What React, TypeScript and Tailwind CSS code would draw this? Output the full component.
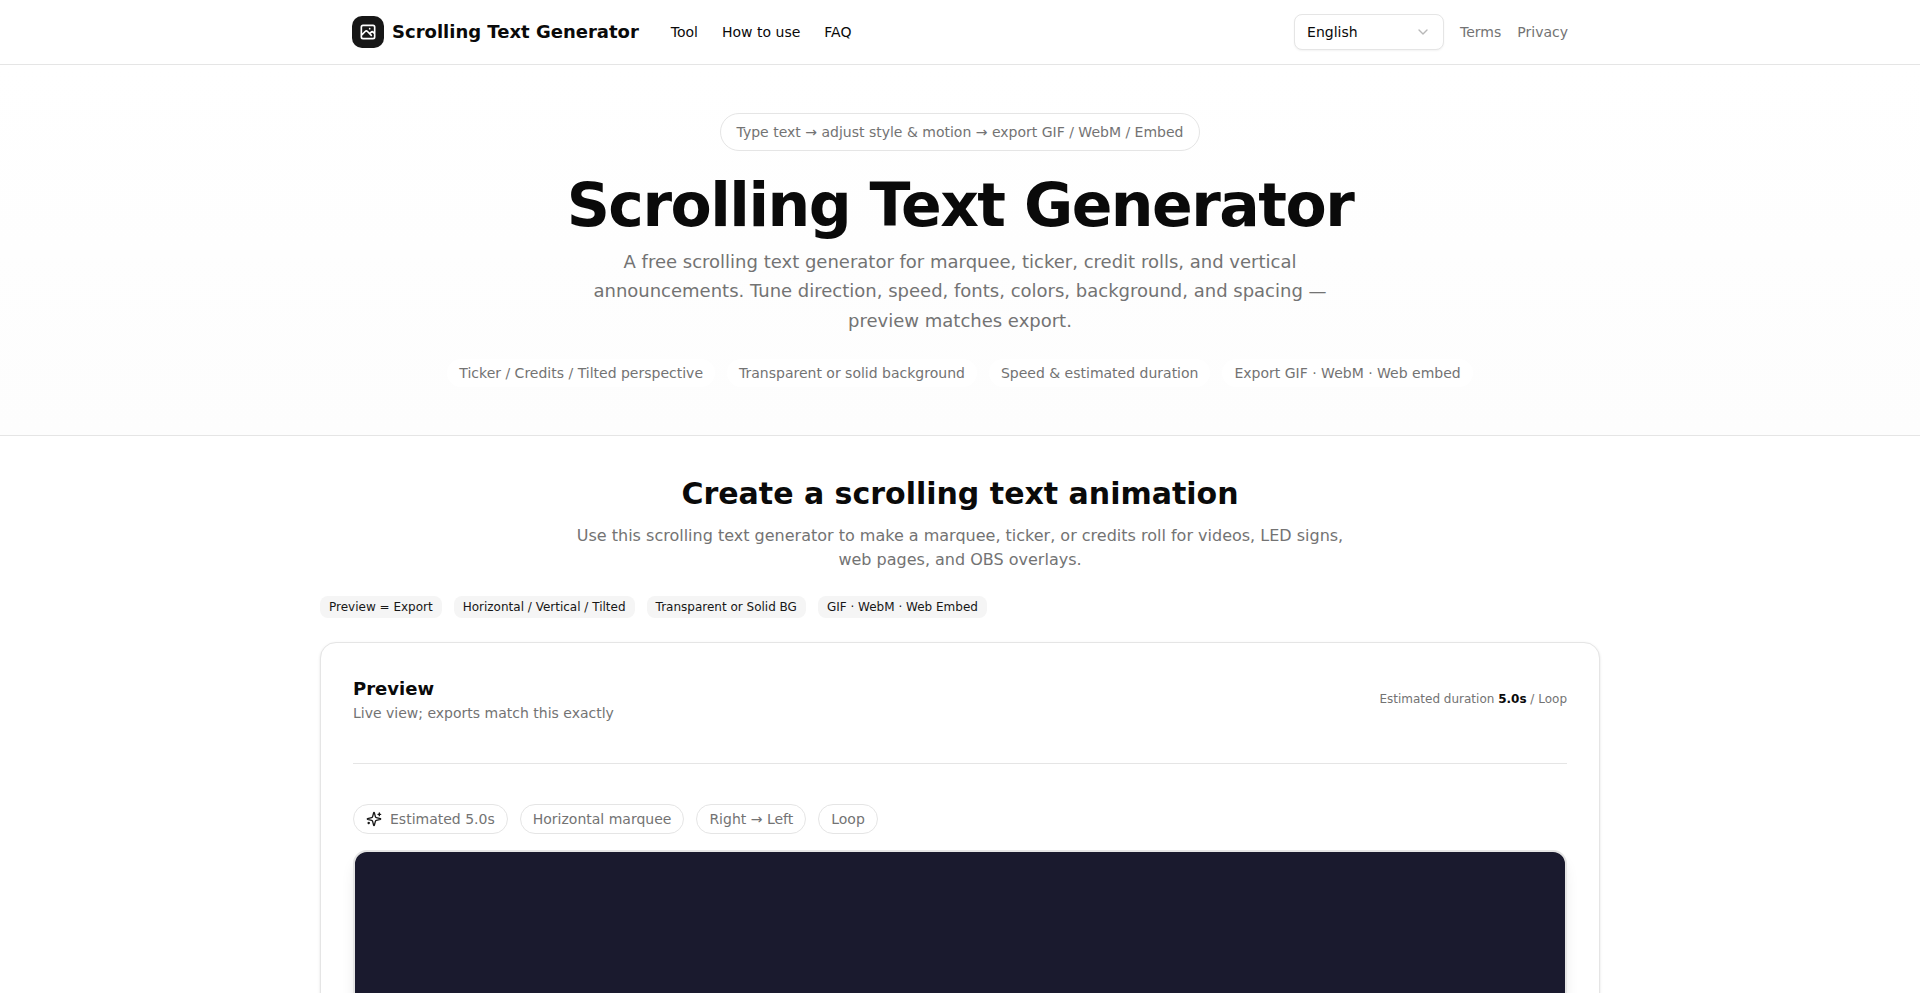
import { useState } from "react";
import { ChevronDown } from "lucide-react";

const NAV = [
  { href: "#tool", label: "Tool" },
  { href: "#how-to-use", label: "How to use" },
  { href: "#faq", label: "FAQ" },
];

const LANGUAGES = ["English", "Deutsch", "Español", "Français"];

const HERO_POINTS = [
  "Ticker / Credits / Tilted perspective",
  "Transparent or solid background",
  "Speed & estimated duration",
  "Export GIF · WebM · Web embed",
];

const BADGES = [
  "Preview = Export",
  "Horizontal / Vertical / Tilted",
  "Transparent or Solid BG",
  "GIF · WebM · Web Embed",
];

function Logo() {
  return (
    <span className="grid h-8 w-8 place-items-center rounded-[10px] bg-neutral-900 text-white">
      <svg
        viewBox="0 0 24 24"
        className="h-5 w-5"
        fill="none"
        stroke="currentColor"
        strokeWidth="2"
        strokeLinecap="round"
        strokeLinejoin="round"
        aria-hidden="true"
      >
        <path d="M4 16l4.586-4.586a2 2 0 012.828 0L16 16m-2-2l1.586-1.586a2 2 0 012.828 0L20 14m-6-6h.01M6 20h12a2 2 0 002-2V6a2 2 0 00-2-2H6a2 2 0 00-2 2v12a2 2 0 002 2z" />
      </svg>
    </span>
  );
}

function SparklesIcon() {
  return (
    <svg
      viewBox="0 0 24 24"
      className="h-4 w-4 text-neutral-900"
      fill="none"
      stroke="currentColor"
      strokeWidth="2"
      strokeLinecap="round"
      strokeLinejoin="round"
      aria-hidden="true"
    >
      <path d="M9.937 15.5A2 2 0 0 0 8.5 14.063l-6.135-1.582a.5.5 0 0 1 0-.962L8.5 9.936A2 2 0 0 0 9.937 8.5l1.582-6.135a.5.5 0 0 1 .963 0L14.063 8.5A2 2 0 0 0 15.5 9.937l6.135 1.581a.5.5 0 0 1 0 .964L15.5 14.063a2 2 0 0 0-1.437 1.437l-1.582 6.135a.5.5 0 0 1-.963 0z" />
      <path d="M20 3v4" />
      <path d="M22 5h-4" />
      <path d="M4 17v2" />
      <path d="M5 18H3" />
    </svg>
  );
}

function Header() {
  const [language, setLanguage] = useState("English");

  return (
    <header className="border-b border-neutral-200 bg-white">
      <div className="mx-auto flex h-16 max-w-7xl items-center justify-between px-8">
        <div className="flex items-center gap-8">
          <a href="#top" className="flex items-center gap-2 text-lg font-bold">
            <Logo />
            Scrolling Text Generator
          </a>
          <nav className="flex items-center gap-6 text-sm">
            {NAV.map((item) => (
              <a key={item.href} href={item.href}>{item.label}</a>
            ))}
          </nav>
        </div>
        <div className="flex items-center gap-4 text-sm text-neutral-500">
          <div className="relative">
            <select
              aria-label="Language"
              value={language}
              onChange={(e) => setLanguage(e.target.value)}
              className="h-9 w-[150px] appearance-none rounded-lg border border-neutral-200 bg-white px-3 text-sm text-neutral-950 shadow-xs"
            >
              {LANGUAGES.map((name) => (
                <option key={name}>{name}</option>
              ))}
            </select>
            <ChevronDown className="pointer-events-none absolute top-[10px] right-[13px] h-4 w-4 opacity-50" />
          </div>
          <a href="#terms">Terms</a>
          <a href="#privacy">Privacy</a>
        </div>
      </div>
    </header>
  );
}

function Hero() {
  return (
    <section className="border-b border-neutral-200 bg-linear-to-b from-white to-[#fdfdfd] py-12">
      <div className="mx-auto flex max-w-7xl flex-col items-center px-8 text-center">
        <p className="rounded-full border border-neutral-200 bg-white px-4 py-2 text-sm text-neutral-500">
          Type text → adjust style &amp; motion → export GIF / WebM / Embed
        </p>
        <h1 className="mt-6 text-6xl leading-none font-bold tracking-tight">Scrolling Text Generator</h1>
        <p className="mt-3 max-w-3xl text-lg leading-relaxed text-neutral-500">
          A free scrolling text generator for marquee, ticker, credit rolls, and vertical announcements. Tune
          direction, speed, fonts, colors, background, and spacing — preview matches export.
        </p>
        <ul className="mt-6 flex flex-wrap justify-center gap-3 text-sm text-neutral-500">
          {HERO_POINTS.map((point) => (
            <li key={point} className="rounded-full bg-white px-3 py-1">{point}</li>
          ))}
        </ul>
      </div>
    </section>
  );
}

function PreviewCard() {
  const pill = "flex items-center gap-2 rounded-full border border-neutral-200 bg-white px-3 py-1";

  return (
    <div className="mt-6 rounded-2xl border border-neutral-200 bg-white p-8 shadow-sm">
      <div className="flex items-center justify-between border-b border-neutral-200 pb-10">
        <div>
          <h3 className="text-lg leading-7 font-bold">Preview</h3>
          <p className="text-sm text-neutral-500">Live view; exports match this exactly</p>
        </div>
        <p className="text-xs text-neutral-500">
          Estimated duration <strong className="font-bold text-neutral-950">5.0s</strong> / Loop
        </p>
      </div>
      <div className="mt-10 flex flex-wrap gap-3 text-sm text-neutral-500">
        <span className={pill}>
          <SparklesIcon />
          Estimated 5.0s
        </span>
        <span className={pill}>Horizontal marquee</span>
        <span className={pill}>Right → Left</span>
        <span className={pill}>Loop</span>
      </div>
      <div className="mt-4 aspect-video rounded-[14px] border-2 border-neutral-200 bg-[#1a1a2e] shadow-lg" />
    </div>
  );
}

export default function App() {
  return (
    <div
      id="top"
      className="h-screen overflow-x-hidden overflow-y-auto bg-white font-['DejaVu_Sans',sans-serif] text-neutral-950 [scrollbar-width:none]"
    >
      <Header />
      <main>
        <Hero />
        <section id="tool" className="mx-auto max-w-7xl py-10">
          <div className="mx-auto max-w-3xl text-center">
            <h2 className="text-3xl leading-9 font-bold">Create a scrolling text animation</h2>
            <p className="mt-3 text-base text-neutral-500">
              Use this scrolling text generator to make a marquee, ticker, or credits roll for videos, LED signs, web
              pages, and OBS overlays.
            </p>
          </div>
          <ul className="mt-6 flex flex-wrap gap-3 text-xs text-neutral-900">
            {BADGES.map((badge) => (
              <li key={badge} className="rounded-lg border border-transparent bg-neutral-100 px-2 py-0.5">
                {badge}
              </li>
            ))}
          </ul>
          <PreviewCard />
        </section>
      </main>
    </div>
  );
}
